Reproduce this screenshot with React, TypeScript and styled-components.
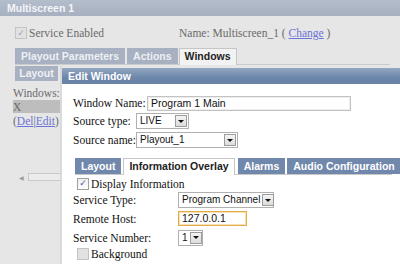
import styled, { createGlobalStyle } from 'styled-components';

const GlobalStyle = createGlobalStyle`
  html, body {
    margin: 0;
    padding: 0;
    background: #e6e6e6;
    overflow: hidden;
  }
`;

const Page = styled.div`
  position: relative;
  width: 400px;
  height: 264px;
  overflow: hidden;
  background: #e6e6e6;
  font-family: 'Liberation Serif', 'Times New Roman', serif;
  font-size: 11.5px;
  color: #6a6a6a;
`;

const TitleBar = styled.div`
  height: 16px;
  background: linear-gradient(#b4bdcb, #a6b0c0);
  color: #f4f5f8;
  font-family: 'Liberation Sans', Arial, sans-serif;
  font-weight: bold;
  font-size: 10.5px;
  line-height: 16px;
  padding-left: 7px;
`;

const Body = styled.div`
  padding: 8px 10px 0 15px;
`;

const TopRow = styled.div`
  display: flex;
  align-items: center;
  height: 18px;
`;

const CheckLabel = styled.label<{ $width?: number }>`
  display: flex;
  align-items: center;
  gap: 2px;
  white-space: nowrap;
  width: ${(p) => (p.$width ? `${p.$width}px` : 'auto')};
`;

const Box = styled.span<{ $muted?: boolean }>`
  display: inline-flex;
  align-items: center;
  justify-content: center;
  width: 10px;
  height: 10px;
  border: 1px solid ${(p) => (p.$muted ? '#c4c4c4' : '#a0a0a0')};
  background: ${(p) => (p.$muted ? '#e2e2e2' : 'linear-gradient(#eeeeee, #ffffff)')};
  color: ${(p) => (p.$muted ? '#9aa3b6' : '#4a5ea0')};
  font-size: 9px;
  line-height: 1;
  font-family: 'DejaVu Sans', sans-serif;
`;

const Link = styled.span`
  color: #6c73d6;
  text-decoration: underline;
`;

const Tabs = styled.div<{ $line: string }>`
  display: flex;
  align-items: flex-end;
  border-bottom: 1px solid ${(p) => p.$line};
`;

const Tab = styled.div<{ $active?: boolean; $bg: string; $fg: string; $activeBg?: string; $gap?: number }>`
  height: ${(p) => (p.$active ? 16 : 15)}px;
  padding: 0 5px;
  margin-left: ${(p) => p.$gap ?? 0}px;
  margin-bottom: ${(p) => (p.$active ? -1 : 0)}px;
  background: ${(p) => (p.$active ? p.$activeBg ?? '#ffffff' : p.$bg)};
  border: 1px solid ${(p) => (p.$active ? '#c6c6c6' : p.$bg)};
  border-bottom: none;
  color: ${(p) => (p.$active ? '#222' : p.$fg)};
  font-family: 'Liberation Sans', Arial, sans-serif;
  font-weight: bold;
  font-size: 10.5px;
  line-height: 15px;
  white-space: nowrap;
`;

const OuterTabs = styled(Tabs)`
  margin-top: 6px;
  width: 375px;
`;

const LeftColumn = styled.div`
  width: 47px;
  padding-top: 1px;
  margin-left: -2px;
`;

const LayoutTab = styled.div`
  width: 43px;
  height: 15px;
  background: #a7b1c1;
  color: #eef0f4;
  font-family: 'Liberation Sans', Arial, sans-serif;
  font-weight: bold;
  font-size: 10.5px;
  line-height: 15px;
  text-align: center;
  margin-left: 2px;
`;

const ListLabel = styled.div`
  height: 19px;
  line-height: 24px;
  white-space: nowrap;
`;

const ListItem = styled.div`
  height: 13px;
  line-height: 14px;
  background: #bdbdbd;
  width: 47px;
`;

const SmallLinks = styled.div`
  line-height: 16px;
  white-space: nowrap;
`;

const ScrollBar = styled.div`
  margin-top: 44px;
  height: 8px;
  width: 49px;
  display: flex;
  align-items: center;
  gap: 4px;
  color: #9a9a9a;
  font-size: 6px;
  font-family: 'DejaVu Sans', sans-serif;
  padding-left: 6px;
`;

const Thumb = styled.div`
  flex: 1;
  height: 6px;
  border: 1px solid #c9c9c9;
  border-right: none;
  background: #ececec;
`;

const Divider = styled.div`
  position: absolute;
  left: 60px;
  top: 64px;
  bottom: 0;
  width: 2px;
  background: #dadada;
`;

const Dialog = styled.div`
  position: absolute;
  left: 62px;
  top: 68px;
  right: -20px;
  bottom: 0;
  background: #ffffff;
  color: #111;
`;

const DialogTitle = styled.div`
  height: 16px;
  background: linear-gradient(#93a7c2, #6d87aa 60%, #6882a5);
  color: #ffffff;
  font-family: 'Liberation Sans', Arial, sans-serif;
  font-weight: bold;
  font-size: 10.5px;
  line-height: 16px;
  padding-left: 6px;
`;

const DialogBody = styled.div`
  padding: 10px 0 0 11px;
`;

const FieldRow = styled.div<{ $labelWidth: number; $h: number }>`
  display: grid;
  grid-template-columns: ${(p) => p.$labelWidth}px auto;
  align-items: center;
  height: ${(p) => p.$h}px;
  white-space: nowrap;
`;

const TextInput = styled.div<{ $width: number; $focus?: boolean }>`
  width: ${(p) => p.$width}px;
  height: 15px;
  box-sizing: border-box;
  border: 1px solid ${(p) => (p.$focus ? '#e3ac4a' : '#c3c3c3')};
  box-shadow: inset 0 0 0 1px ${(p) => (p.$focus ? '#f7e0b3' : '#ededed')};
  font-family: 'Liberation Sans', Arial, sans-serif;
  font-size: 10.5px;
  line-height: 13px;
  padding-left: 3px;
  color: #111;
`;

const Select = styled.div<{ $width: number }>`
  display: flex;
  align-items: center;
  justify-content: space-between;
  gap: 2px;
  box-sizing: border-box;
  width: ${(p) => p.$width}px;
  height: 16px;
  border: 1px solid #b0b0b0;
  font-family: 'Liberation Sans', Arial, sans-serif;
  font-size: 10px;
  line-height: 14px;
  padding-left: 3px;
  color: #111;
  background: #fff;
`;

const Arrow = styled.span`
  box-sizing: border-box;
  flex: none;
  width: 12px;
  height: 12px;
  margin-right: 1px;
  border: 1px solid #9c9c9c;
  background: linear-gradient(#f4f4f4, #dcdcdc);
  display: flex;
  align-items: center;
  justify-content: center;

  &::after {
    content: '';
    border-left: 3px solid transparent;
    border-right: 3px solid transparent;
    border-top: 3px solid #111;
  }
`;

const InnerTabs = styled(Tabs)`
  margin-top: 8px;
  margin-left: 2px;
  width: 317px;
`;

const Section = styled.div`
  padding-top: 1px;
`;

const InnerCheck = styled(CheckLabel)<{ $h: number }>`
  height: ${(p) => p.$h}px;
  margin-left: 4px;
`;

export default function App() {
  return (
    <Page>
      <GlobalStyle />
      <TitleBar>Multiscreen 1</TitleBar>
      <Body>
        <TopRow>
          <CheckLabel $width={164}>
            <Box $muted>✓</Box>
            <span>Service Enabled</span>
          </CheckLabel>
          <span>
            Name: Multiscreen_1 ( <Link>Change</Link> )
          </span>
        </TopRow>
        <OuterTabs $line="#cacaca">
          <Tab $bg="#a7b1c1" $fg="#eef0f4">Playout Parameters</Tab>
          <Tab $bg="#a7b1c1" $fg="#eef0f4" $gap={2}>Actions</Tab>
          <Tab $active $activeBg="#f2f2f2" $bg="#a7b1c1" $fg="#eef0f4" $gap={1}>
            Windows
          </Tab>
        </OuterTabs>
        <LeftColumn>
          <LayoutTab>Layout</LayoutTab>
          <ListLabel>Windows:</ListLabel>
          <ListItem>X</ListItem>
          <SmallLinks>
            (<Link>Del</Link>|<Link>Edit</Link>)
          </SmallLinks>
          <ScrollBar>
            ◀<Thumb />
          </ScrollBar>
        </LeftColumn>
      </Body>
      <Divider />
      <Dialog>
        <DialogTitle>Edit Window</DialogTitle>
        <DialogBody>
          <FieldRow $labelWidth={74} $h={18}>
            <span>Window Name:</span>
            <TextInput $width={204}>Program 1 Main</TextInput>
          </FieldRow>
          <FieldRow $labelWidth={63} $h={18}>
            <span>Source type:</span>
            <Select $width={53}>
              LIVE
              <Arrow />
            </Select>
          </FieldRow>
          <FieldRow $labelWidth={63} $h={20}>
            <span>Source name:</span>
            <Select $width={102}>
              Playout_1
              <Arrow />
            </Select>
          </FieldRow>
          <InnerTabs $line="#c9c9c9">
            <Tab $bg="#6f88ab" $fg="#ffffff">Layout</Tab>
            <Tab $active $bg="#6f88ab" $fg="#ffffff" $gap={2}>Information Overlay</Tab>
            <Tab $bg="#6f88ab" $fg="#ffffff" $gap={3}>Alarms</Tab>
            <Tab $bg="#6f88ab" $fg="#ffffff" $gap={2}>Audio Configuration</Tab>
          </InnerTabs>
          <Section>
            <InnerCheck $h={15}>
              <Box>✓</Box>
              <span>Display Information</span>
            </InnerCheck>
            <FieldRow $labelWidth={105} $h={18}>
              <span>Service Type:</span>
              <Select $width={96}>
                Program Channel
                <Arrow />
              </Select>
            </FieldRow>
            <FieldRow $labelWidth={105} $h={19}>
              <span>Remote Host:</span>
              <TextInput $width={69} $focus>
                127.0.0.1
              </TextInput>
            </FieldRow>
            <FieldRow $labelWidth={105} $h={19}>
              <span>Service Number:</span>
              <Select $width={25}>
                1
                <Arrow />
              </Select>
            </FieldRow>
            <InnerCheck $h={14}>
              <Box $muted />
              <span>Background</span>
            </InnerCheck>
          </Section>
        </DialogBody>
      </Dialog>
    </Page>
  );
}
